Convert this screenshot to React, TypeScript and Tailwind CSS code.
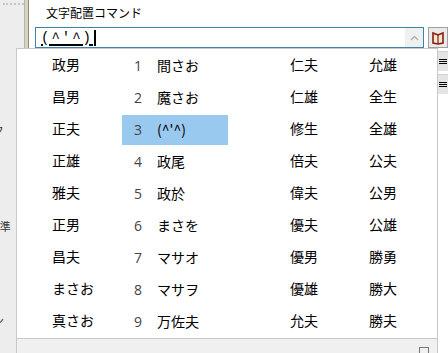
import React from 'react';

const rows = [
  ['政男', '間さお', '仁夫', '允雄'],
  ['昌男', '魔さお', '仁雄', '全生'],
  ['正夫', "(^'^)", '修生', '全雄'],
  ['正雄', '政尾', '倍夫', '公夫'],
  ['雅夫', '政於', '偉夫', '公男'],
  ['正男', 'まさを', '優夫', '公雄'],
  ['昌夫', 'マサオ', '優男', '勝勇'],
  ['まさお', 'マサヲ', '優雄', '勝大'],
  ['真さお', '万佐夫', '允夫', '勝夫'],
];

const App = () => {
  return (
    <div
      className="relative w-[448px] h-[353px] overflow-hidden bg-white flex text-black"
      style={{ fontFamily: '"Noto Sans CJK JP", "Noto Sans", sans-serif' }}
    >
      {/* left panel */}
      <div className="w-[28px] h-full bg-[#ededed] flex flex-col overflow-hidden text-[11px] text-[#333]">
        <div className="mt-[3px] ml-[3px] w-[24px] border-t-2 border-dotted border-[#c4c4c4]" />
        <div className="mt-[118px] h-[14px] flex justify-end pr-[20px] whitespace-nowrap leading-[14px]">ワーク</div>
        <div className="mt-[82px] h-[14px] flex justify-end pr-[13px] whitespace-nowrap leading-[14px]">標準</div>
        <div className="mt-[80px] h-[14px] flex justify-end pr-[20px] whitespace-nowrap leading-[14px]">ン</div>
      </div>
      <div className="w-px h-full bg-[#b5b5b5]" />
      <div className="w-[4px] h-full bg-[#d8d3bb]" />
      <div className="w-px h-full bg-[#8e8c78]" />

      {/* main area */}
      <div className="flex-1 flex flex-col">
        <div className="h-[27px] pl-[17px] pt-[5px] text-[12px] leading-[16px]">文字配置コマンド</div>
        <div className="flex items-start">
          <div className="ml-[6px] w-[389px] h-[21px] border border-[#3d84ad] flex items-center">
            <span
              className="ml-[5px] text-[14px] leading-[16px] tracking-[2px] underline decoration-2 underline-offset-2"
              style={{ fontFamily: '"Liberation Mono", monospace' }}
            >
              (^'^)
            </span>
            <span className="w-[2px] h-[16px] bg-black ml-[1px]" />
            <div className="ml-auto w-[18px] h-full bg-[#f0f0f0] flex items-center justify-center">
              <svg width="9" height="6" viewBox="0 0 9 6">
                <path d="M1 5 L4.5 1.5 L8 5" fill="none" stroke="#b0b0b0" strokeWidth="1.3" />
              </svg>
            </div>
          </div>
          <div className="ml-[4px] w-[20px] h-[21px] border border-[#a0a0a0] bg-[#eaeaea] flex items-center justify-center">
            <svg width="12" height="14" viewBox="0 0 12 14">
              <path d="M1 2 L6 4 L11 2 V12 L6 13 L1 12 Z" fill="#f4e7d0" stroke="#8a1e12" strokeWidth="1.6" />
              <path d="M6 4 V13" stroke="#8a1e12" strokeWidth="1.2" />
            </svg>
          </div>
        </div>
        <div className="ml-auto mr-0 mt-[3px] w-[10px] flex flex-col gap-[3px]">
          {[0, 1].map((i) => (
            <div key={i} className="h-[20px] bg-[#e4e4e4] border-t border-[#cfcfcf] flex flex-col justify-center gap-px pl-[1px]">
              <div className="h-px w-[8px] bg-black" />
              <div className="h-px w-[8px] bg-black" />
              <div className="h-px w-[8px] bg-black" />
            </div>
          ))}
        </div>
      </div>

      {/* candidate popup */}
      <div className="absolute left-[16px] top-[48px] w-[422px] h-[305px] bg-white border-t border-l border-r border-[#c8c8c8] flex flex-col">
        <div className="flex flex-col pt-px">
          {rows.map((r, i) => (
            <div key={i} className="grid grid-cols-[105px_106px_106px_1fr] h-[32px] text-[14px]">
              <div className="pl-[35px] pb-[3px] flex items-center">{r[0]}</div>
              <div className={`flex items-center pl-[12px] pb-[2px] my-px ${i === 2 ? 'bg-[#99c9ef]' : ''}`}>
                <span className="w-[23px] text-[#444]" style={{ fontFamily: '"Open Sans", sans-serif' }}>{i + 1}</span>
                <span>{r[1]}</span>
              </div>
              <div className="pl-[62px] pb-[3px] flex items-center">{r[2]}</div>
              <div className="pl-[35px] pb-[3px] flex items-center">{r[3]}</div>
            </div>
          ))}
        </div>
        <div className="mt-auto h-[15px] border-t border-[#c8c8c8] bg-[#f0f0f0] flex justify-end pr-[8px] pt-[8px]">
          <div className="w-[10px] h-[8px] border border-b-0 border-[#777]" />
        </div>
      </div>
    </div>
  );
};

export default App;
